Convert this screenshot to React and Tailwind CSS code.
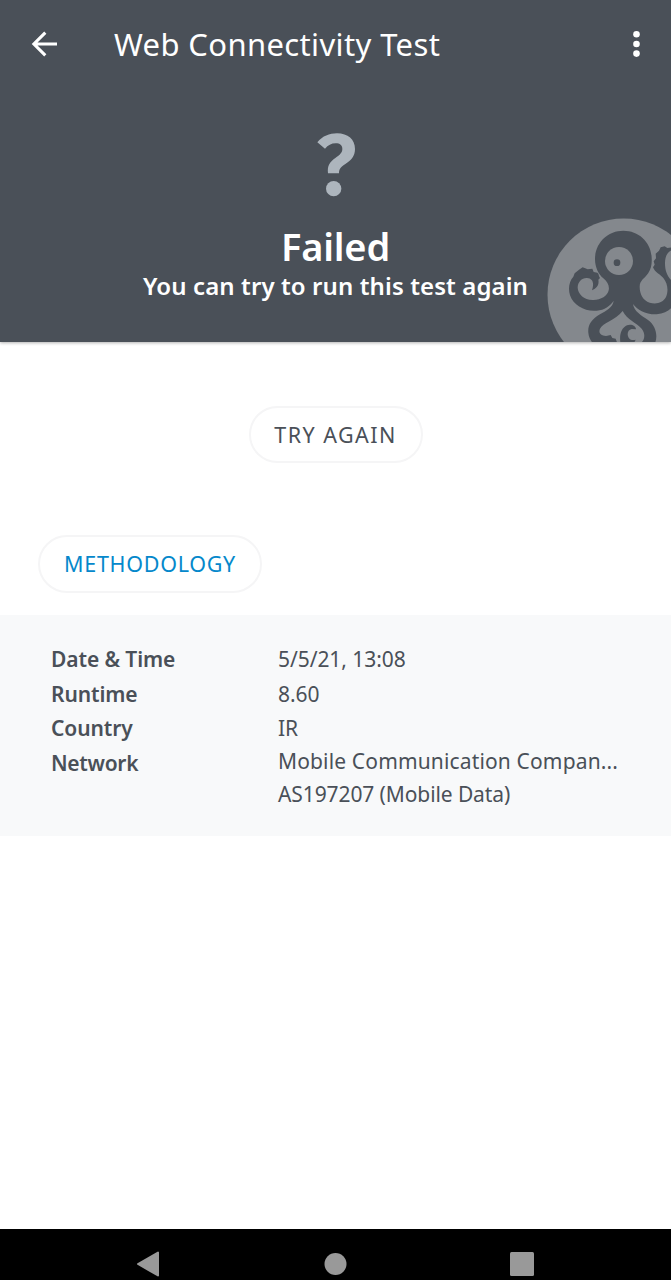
function Octopus() {
  return (
    <svg className="absolute bottom-0 right-0 h-[137px] w-[140px]" viewBox="0 0 420 411" aria-hidden="true">
      <circle cx="278" cy="269" r="228.5" fill="#84888d" />
      <g fill="#4a5058">
        <path d="M277 77C229 77 192 115 192 162C192 188 203 208 217 220C230 231 236 243 233 256C230 273 208 286 185 285C158 284 141 267 140 248C140 231 153 218 168 219C186 220 190 235 183 256C198 250 205 239 202 224L207 219C202 213 205 207 199 203L188 201L184 191L170 193L155 187L144 194L131 205L127 215C114 229 111 252 117 271C128 302 161 320 197 317C221 315 237 303 248 287C246 307 225 317 207 328C180 344 170 361 172 383C173 397 179 404 183 412H258L254 401L244 399L239 390L225 393C208 392 202 383 207 371C215 354 252 346 275 318C288 344 318 355 332 371C343 384 342 402 332 412H373C381 389 373 361 351 345C332 332 309 319 306 297C319 315 343 329 377 328C397 326 411 319 421 309V226C408 213 402 196 402 175C402 154 409 142 421 136V127L409 129L401 124L389 127L384 137L374 146L375 160L368 169L371 179L366 187C372 203 388 208 397 219C410 235 413 258 405 276C396 293 376 299 356 293C336 287 326 267 326 246C326 225 342 220 352 204C361 190 363 176 362 158C360 112 324 77 277 77Z" />
        <path d="M268 412C265 389 271 369 288 361C301 356 315 363 315 373L302 372C290 374 287 389 293 398C299 407 309 406 314 404L310 412Z" />
      </g>
      <circle cx="264" cy="168" r="42" fill="#84888d" />
      <circle cx="258" cy="173" r="10" fill="#4a5058" />
    </svg>
  );
}

function Row({ label, children }) {
  return (
    <div className="flex h-[34.7px] items-center">
      <dt className="w-[227px] shrink-0 font-semibold tracking-[-0.1px]">{label}</dt>
      <dd className="whitespace-nowrap tracking-[-0.06px]">{children}</dd>
    </div>
  );
}

export default function App() {
  return (
    <div className="flex h-[1280px] w-[671px] flex-col overflow-hidden bg-white font-['Noto_Sans',sans-serif] text-[#4a5058]">
      <header className="relative z-10 h-[342px] shrink-0 bg-[#4a5058] text-white shadow-[0_1px_3px_rgba(0,0,0,0.3)]">
        <div className="flex h-[88px] items-center">
          <button aria-label="Back" className="ml-[31px] w-[83px]">
            <svg className="h-[26px] w-[27px]" viewBox="0 0 27 26" fill="none" stroke="white" strokeWidth="3.1">
              <path d="M26 13H3M14.3 1.6L2.9 13L14.3 24.4" />
            </svg>
          </button>
          <h1 className="flex-1 whitespace-nowrap text-[31px] leading-[40px] tracking-[0.37px]">Web Connectivity Test</h1>
          <button aria-label="More options" className="mr-[31.5px]">
            <svg className="h-[26px] w-[7px]" viewBox="0 0 7 26" fill="white">
              <circle cx="3.5" cy="3.3" r="3.3" />
              <circle cx="3.5" cy="13" r="3.3" />
              <circle cx="3.5" cy="22.6" r="3.3" />
            </svg>
          </button>
        </div>
        <Octopus />
        <div className="relative flex flex-col items-center pt-[45px]">
          <svg className="h-[64px] w-[40px]" viewBox="0 0 120 192" fill="#adb5bd" role="img" aria-label="Unknown result">
            <path d="M4 28C20 9 40 1 63 1C96 1 117 20 117 48C117 70 105 82 87 94C74 103 69 108 69 121H36C34 98 40 88 58 75C72 65 79 59 79 48C79 37 72 31 59 31C46 31 36 37 27 47Z" />
            <circle cx="53" cy="167" r="23" />
          </svg>
          <h2 className="mt-[25px] text-[38px] font-semibold leading-[48px] tracking-[-0.2px]">Failed</h2>
          <p className="whitespace-nowrap text-[24px] font-semibold leading-[32px] tracking-[0.1px]">You can try to run this test again</p>
        </div>
      </header>

      <main className="flex flex-1 flex-col">
        <button className="mt-[64px] h-[57px] w-[174px] self-center whitespace-nowrap rounded-full border-2 border-[#f5f5f6] pt-px text-[21.5px] tracking-[1.45px]">
          TRY AGAIN
        </button>
        <button className="ml-[38px] mt-[72px] h-[58px] w-[224px] whitespace-nowrap rounded-full border-2 border-[#f5f5f6] pt-px text-[21.5px] tracking-[0.72px] text-[#0588cb]">
          METHODOLOGY
        </button>
        <dl className="mt-[22px] h-[221px] bg-[#f8f9fa] pl-[51px] pt-[27px] text-[21px] leading-[33px]">
          <Row label="Date &amp; Time">5/5/21, 13:08</Row>
          <Row label="Runtime">8.60</Row>
          <Row label="Country">IR</Row>
          <div className="flex">
            <dt className="w-[227px] shrink-0 pt-px font-semibold tracking-[-0.3px]">Network</dt>
            <dd className="-mt-px whitespace-nowrap">
              <div className="tracking-[0.15px]">Mobile Communication Compan...</div>
              <div className="tracking-[-0.1px]">AS197207 (Mobile Data)</div>
            </dd>
          </div>
        </dl>
      </main>

      <nav className="h-[51px] shrink-0 bg-black">
        <svg className="h-[51px] w-[671px]" viewBox="0 0 671 51" fill="#999" stroke="#999" strokeLinejoin="round">
          <path d="M138 35L158 23.5V46.5Z" strokeWidth="2" />
          <circle cx="335.5" cy="35" r="11" stroke="none" />
          <rect x="510" y="23" width="24" height="24" rx="1.5" stroke="none" />
        </svg>
      </nav>
    </div>
  );
}
